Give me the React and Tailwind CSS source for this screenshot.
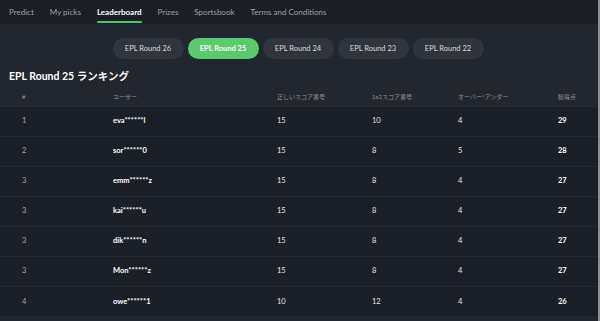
import React from 'react';

const tabs = ['Predict', 'My picks', 'Leaderboard', 'Prizes', 'Sportsbook', 'Terms and Conditions'];
const rounds = ['EPL Round 26', 'EPL Round 25', 'EPL Round 24', 'EPL Round 23', 'EPL Round 22'];
const rows = [
  ['1', 'eva******l', 15, 10, 4, 29],
  ['2', 'sor******0', 15, 8, 5, 28],
  ['3', 'emm******z', 15, 8, 4, 27],
  ['3', 'kai******u', 15, 8, 4, 27],
  ['3', 'dik******n', 15, 8, 4, 27],
  ['3', 'Mon******z', 15, 8, 4, 27],
  ['4', 'owe******1', 10, 12, 4, 26],
];

const font = { fontFamily: 'Lato, "Noto Sans CJK JP", sans-serif' };

export default function App() {
  return (
    <div className="w-[600px] h-[321px] overflow-hidden bg-[#22262e] border-r-2 border-[#8a8d93]" style={font}>
      <nav className="h-[24px] bg-[#1b1e24] flex items-stretch pl-[9px] gap-[16px] text-[8px] text-[#9ea2a8]">
        {tabs.map(t => (
          <div key={t} className={`flex items-center relative ${t === 'Leaderboard' ? 'text-white font-bold' : ''}`}>
            {t}
            {t === 'Leaderboard' && <div className="absolute left-0 right-0 bottom-[1px] h-[2px] bg-[#4cc76a] rounded"></div>}
          </div>
        ))}
      </nav>
      <div className="flex justify-center gap-[4px] pt-[14px] pb-[9px] pr-[2px]">
        {rounds.map(r => (
          <div key={r} className={`h-[21px] w-[71px] justify-center rounded-full flex items-center text-[7.5px] ${r === 'EPL Round 25' ? 'bg-[#5acb6c] text-white font-bold' : 'bg-[#30343c] text-[#d8dadd]'}`}>
            {r}
          </div>
        ))}
      </div>
      <h1 className="px-[9px] text-[10.5px] font-bold text-white leading-[16px]">EPL Round 25 ランキング</h1>
      <table className="w-full text-[6px] mt-[4px]">
        <thead>
          <tr className="text-[#8d9197] h-[18px] text-left">
            <th className="font-normal pl-[22px] w-[113px]">#</th>
            <th className="font-normal w-[164px]">ユーザー</th>
            <th className="font-normal w-[95px]">正しいスコア番号</th>
            <th className="font-normal w-[86px]">1x2スコア番号</th>
            <th className="font-normal w-[100px]">オーバー*アンダー</th>
            <th className="font-normal">総得点</th>
          </tr>
        </thead>
        <tbody>
          {rows.map((r, i) => (
            <tr key={i} className="bg-[#1b1f27] h-[30px] border-t border-[#262a32] text-[7.5px]">
              <td className="pl-[22px] text-[#a3a6ab]">{r[0]}</td>
              <td className="text-white font-bold">{r[1]}</td>
              <td className="text-[#e6e7e9]">{r[2]}</td>
              <td className="text-[#e6e7e9]">{r[3]}</td>
              <td className="text-[#e6e7e9]">{r[4]}</td>
              <td className="text-white font-bold">{r[5]}</td>
            </tr>
          ))}
        </tbody>
      </table>
    </div>
  );
}
